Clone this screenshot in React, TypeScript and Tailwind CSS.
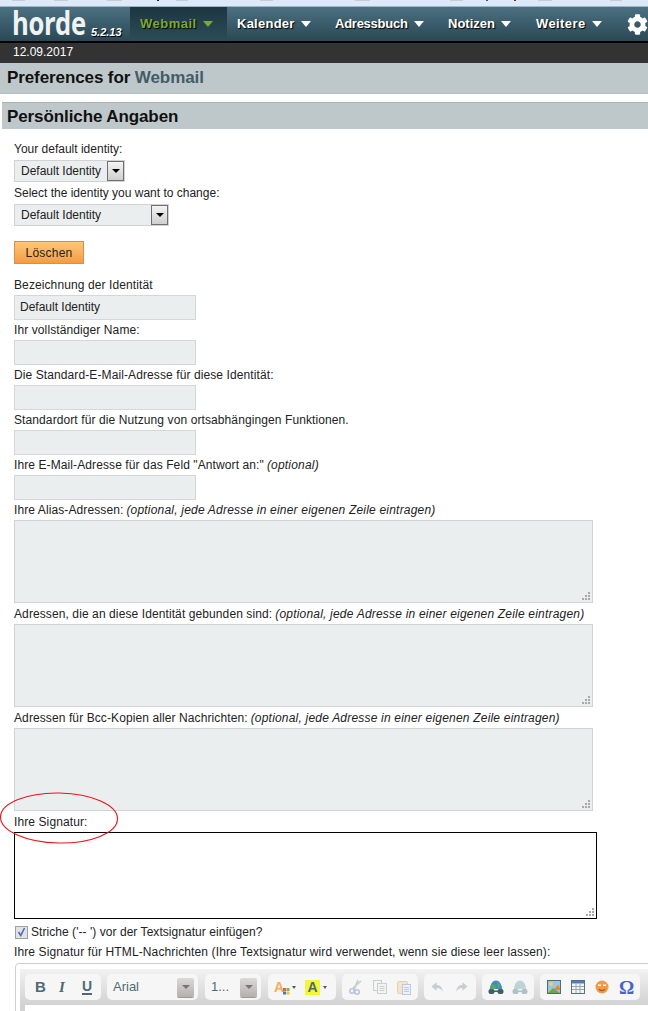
import { FaCog } from "react-icons/fa";

const stripMarks = [
  { x: 12, w: 13, c: "#c5ccd2" },
  { x: 54, w: 14, c: "#c5ccd2" },
  { x: 107, w: 15, c: "#c5ccd2" },
  { x: 157, w: 2, c: "#1a2030" },
  { x: 176, w: 12, c: "#c5ccd2" },
  { x: 260, w: 13, c: "#c5ccd2" },
  { x: 355, w: 15, c: "#c5ccd2" },
  { x: 450, w: 13, c: "#c5ccd2" },
  { x: 486, w: 2, c: "#3050b0" },
  { x: 514, w: 2, c: "#802020" },
  { x: 538, w: 14, c: "#c5ccd2" },
  { x: 610, w: 12, c: "#c5ccd2" },
];

function Label({ children, note }: { children: React.ReactNode; note?: string }) {
  return (
    <div className="flex h-[11px] items-center tracking-[0.1px] whitespace-nowrap">
      {children}
      {note && <em className="ml-[3px] tracking-[0.2px]">{note}</em>}
    </div>
  );
}

function Field({ value }: { value?: string }) {
  return (
    <div className="mt-[5px] mb-[4px] h-[25px] w-[182px] border border-[#d4d7d7] bg-[#ebeeee] px-[5px] leading-[22px]">
      {value}
    </div>
  );
}

function Area() {
  return (
    <div className="relative mt-[5px] mb-[5px] h-[83px] w-[579px] border border-[#d0d3d3] bg-[#ebeeee]">
      <Grip />
    </div>
  );
}

function Grip() {
  return (
    <svg className="absolute right-[2px] bottom-[2px]" width="9" height="9" viewBox="0 0 9 9" fill="#a9a9a9">
      <rect x="7" y="1" width="2" height="2" />
      <rect x="4" y="4" width="2" height="2" />
      <rect x="7" y="4" width="2" height="2" />
      <rect x="1" y="7" width="2" height="2" />
      <rect x="4" y="7" width="2" height="2" />
      <rect x="7" y="7" width="2" height="2" />
    </svg>
  );
}

function SelectBox({ width }: { width: string }) {
  return (
    <div className={`flex h-[22px] items-center justify-between border border-[#d0d3d3] bg-[#ebeeee] pl-[6px] ${width}`}>
      <span>Default Identity</span>
      <span className="flex h-[20px] w-[17px] items-center justify-center border border-[#6f6f6f] bg-gradient-to-b from-[#f4f4f4] to-[#cfcfcf]">
        <span className="h-0 w-0 border-x-[4px] border-t-[4px] border-x-transparent border-t-black" />
      </span>
    </div>
  );
}

function NavItem({ label, className }: { label: string; className: string }) {
  return (
    <div className={`flex h-full shrink-0 items-center gap-[6px] text-[13px] font-bold text-white [text-shadow:1px_1px_1px_#000] ${className}`}>
      {label}
      <span className="h-0 w-0 border-x-[5px] border-t-[6px] border-x-transparent border-t-white" />
    </div>
  );
}

function ToolGroup({ children, className }: { children: React.ReactNode; className?: string }) {
  return <div className={`flex h-[26px] shrink-0 items-center rounded-[5px] bg-[#f6f6f6] ${className ?? ""}`}>{children}</div>;
}

function DropArrow() {
  return (
    <span className="flex h-[19px] w-[17px] items-center justify-center rounded-[2px] bg-gradient-to-b from-[#dcd9d9] to-[#b4b0b0] shadow-[0_1px_0_#999]">
      <span className="h-0 w-0 border-x-[4px] border-t-[4px] border-x-transparent border-t-[#777]" />
    </span>
  );
}

function Caret({ className }: { className: string }) {
  return <span className={`h-0 w-0 border-x-[2.5px] border-t-[3px] border-x-transparent border-t-[#555] ${className}`} />;
}

export default function App() {
  return (
    <div className="relative h-[1011px] w-[648px] overflow-hidden bg-white font-['Liberation_Sans',Arial,sans-serif] text-[12px] text-[#222]">
      <div className="relative h-[6px] bg-[#dce9f8]">
        {stripMarks.map((m) => (
          <span key={m.x} className="absolute top-0 h-[1px]" style={{ left: m.x, width: m.w, backgroundColor: m.c }} />
        ))}
      </div>
      <div className="h-[1px] bg-[#9fb4c4]" />

      <div className="flex h-[34px] items-center bg-gradient-to-b from-[#4b7182] to-[#2b4854]">
        <div className="flex h-full w-[130px] shrink-0 items-end pl-[12px]">
          <div className="h-full w-[73px] shrink-0">
            <span className="block origin-left scale-x-[0.8] font-['Open_Sans',sans-serif] text-[32px] leading-[31px] font-bold tracking-[-0.5px] whitespace-nowrap text-[#f0f3f3]">
              horde
            </span>
          </div>
          <span className="mb-[3px] ml-[6px] text-[11px] leading-none font-bold italic text-white [text-shadow:1px_1px_0_#000]">5.2.13</span>
        </div>
        <div className="flex h-full w-[97px] shrink-0 items-center gap-[6px] bg-gradient-to-b from-[#1d3640] to-[#2d4c58] pl-[10px] text-[13px] font-bold tracking-[0.5px] text-[#7aa83a] [text-shadow:1px_1px_1px_#000]">
          Webmail
          <span className="h-0 w-0 border-x-[5px] border-t-[6px] border-x-transparent border-t-[#7aa83a]" />
        </div>
        <NavItem label="Kalender" className="ml-[10px] w-[98px] tracking-[0.25px]" />
        <NavItem label="Adressbuch" className="w-[113px] tracking-[-0.25px]" />
        <NavItem label="Notizen" className="w-[88px]" />
        <NavItem label="Weitere" className="w-[91px] tracking-[0.4px]" />
        <FaCog className="shrink-0 text-[21px] text-white" />
      </div>
      <div className="h-[2px] bg-black" />

      <div className="h-[20px] bg-[#333] pl-[13px] leading-[19px] text-white">12.09.2017</div>

      <div className="h-[31px] border-b border-[#b5bfc1] bg-[#bec8ca] pl-[7px] text-[17px] leading-[29px] font-bold tracking-[-0.1px] text-[#111]">
        Preferences for <span className="text-[#425c68]">Webmail</span>
      </div>

      <div className="mt-[8px] ml-[2px] h-[27px] border-t border-[#a9b3b5] bg-[#bec8ca] pl-[5px] text-[17px] leading-[28px] font-bold tracking-[-0.1px] text-[#111]">
        Persönliche Angaben
      </div>

      <div className="pl-[14px]">
        <div className="mt-[14px] flex h-[11px] items-center whitespace-nowrap">Your default identity:</div>
        <div className="mt-[6px] mb-[5px]">
          <SelectBox width="w-[111px]" />
        </div>
        <div className="flex h-[11px] items-center whitespace-nowrap">Select the identity you want to change:</div>
        <div className="mt-[6px]">
          <SelectBox width="w-[155px]" />
        </div>

        <button className="mt-[15px] block h-[23px] w-[70px] border border-[#d98f45] bg-gradient-to-b from-[#fdc778] to-[#f39c43] text-center text-[12px] tracking-[0.2px] text-[#222]">
          Löschen
        </button>

        <div className="mt-[15px]">
          <Label>Bezeichnung der Identität</Label>
          <Field value="Default Identity" />
          <Label>Ihr vollständiger Name:</Label>
          <Field />
          <Label>Die Standard-E-Mail-Adresse für diese Identität:</Label>
          <Field />
          <Label>Standardort für die Nutzung von ortsabhängingen Funktionen.</Label>
          <Field />
          <Label note="(optional)">Ihre E-Mail-Adresse für das Feld "Antwort an:"</Label>
          <Field />
          <Label note="(optional, jede Adresse in einer eigenen Zeile eintragen)">Ihre Alias-Adressen:</Label>
          <Area />
          <Label note="(optional, jede Adresse in einer eigenen Zeile eintragen)">Adressen, die an diese Identität gebunden sind:</Label>
          <Area />
          <Label note="(optional, jede Adresse in einer eigenen Zeile eintragen)">Adressen für Bcc-Kopien aller Nachrichten:</Label>
          <Area />
          <Label>Ihre Signatur:</Label>
          <div className="relative mt-[5px] h-[87px] w-[583px] border-[1.5px] border-black bg-white">
            <Grip />
          </div>
        </div>

        <div className="mt-[6px] flex h-[14px] items-center gap-[3px] tracking-[0.05px]">
          <span className="ml-[1px] flex h-[13px] w-[13px] items-center justify-center border border-[#a0a0a0] bg-[#e2e2e2]">
            <svg width="9" height="10" viewBox="0 0 9 10" fill="none" stroke="#4a6cc4" strokeWidth="1.6">
              <path d="M1.5 5 L3.8 8.5 L7.5 1" />
            </svg>
          </span>
          Striche ('-- ') vor der Textsignatur einfügen?
        </div>
        <div className="mt-[8px] h-[11px] leading-[11px] tracking-[0.12px] whitespace-nowrap">
          Ihre Signatur für HTML-Nachrichten (Ihre Textsignatur wird verwendet, wenn sie diese leer lassen):
        </div>

        <div className="mt-[5px] ml-[1px] h-[60px] w-[660px] rounded-[4px] border border-[#cfcfcf] bg-white px-[4px] py-[5px]">
          <div className="flex h-[36px] items-start gap-[6px] bg-gradient-to-b from-[#f2f2f2] to-[#d2d2d2] px-[5px] pt-[5px]">
            <ToolGroup className="w-[76px] text-[#4d6b72]">
              <span className="ml-[10px] w-[24px] text-[15px] font-bold">B</span>
              <span className="w-[23px] font-['Liberation_Serif',serif] text-[15px] font-bold italic">I</span>
              <span className="border-b-[2px] border-[#4d6b72] text-[14px] leading-[14px] font-bold">U</span>
            </ToolGroup>
            <ToolGroup className="w-[91px] justify-between pr-[4px] pl-[6px] text-[13px] text-[#4d6b72]">
              <span>Arial</span>
              <DropArrow />
            </ToolGroup>
            <ToolGroup className="ml-[1px] w-[56px] justify-between pr-[4px] pl-[6px] text-[13px] text-[#4d6b72]">
              <span>1...</span>
              <DropArrow />
            </ToolGroup>
            <ToolGroup className="ml-[1px] w-[68px] pl-[6px]">
              <span className="text-[14px] leading-none font-bold text-[#f5ae5b]">A</span>
              <svg width="7" height="7" viewBox="0 0 7 7" className="mt-[8px] -ml-[1px]">
                <rect x="0" y="0" width="3" height="3" fill="#e0643c" />
                <rect x="3.5" y="0" width="3" height="3" fill="#7ab648" />
                <rect x="0" y="3.5" width="3" height="3" fill="#3f78d6" />
                <rect x="3.5" y="3.5" width="3" height="3" fill="#f0c330" />
              </svg>
              <Caret className="ml-[2px]" />
              <span className="ml-[9px] flex h-[15px] w-[15px] items-center justify-center bg-[#f5f53c] text-[14px] font-bold text-[#4d6b72]">A</span>
              <Caret className="ml-[3px]" />
            </ToolGroup>
            <ToolGroup className="w-[76px] gap-[8px] pl-[6px]">
              <svg width="16" height="16" viewBox="0 0 16 16" fill="none" stroke="#b8c4dc" strokeWidth="1.6">
                <path d="M10 1 L6 11 M13 2 L5 9" stroke="#c5cccc" />
                <circle cx="4" cy="12" r="2.2" />
                <circle cx="9" cy="13" r="2.2" />
              </svg>
              <svg width="16" height="16" viewBox="0 0 16 16" fill="#f4f4f4" stroke="#c8cfcf">
                <rect x="1.5" y="1.5" width="8" height="10" />
                <rect x="5.5" y="4.5" width="9" height="10" />
                <path d="M7.5 7.5h5M7.5 9.5h5M7.5 11.5h5" />
              </svg>
              <svg width="16" height="16" viewBox="0 0 16 16" fill="#f6e3cc" stroke="#e3cfb8">
                <rect x="1.5" y="2.5" width="10" height="12" rx="1" />
                <rect x="6.5" y="5.5" width="8" height="10" fill="#eef1f8" stroke="#b8c8e6" />
                <path d="M8 8.5h5M8 10.5h5M8 12.5h5" stroke="#b8c8e6" />
              </svg>
            </ToolGroup>
            <ToolGroup className="w-[52px] gap-[11px] pl-[7px]">
              <svg width="13" height="12" viewBox="0 0 14 12" fill="#c6cfcf">
                <path d="M6 1 L0.5 5.5 L6 10 V7 C9 7 11 8 12.5 11 C12.5 6.5 10 3.8 6 3.8 Z" />
              </svg>
              <svg width="13" height="12" viewBox="0 0 14 12" fill="#c6cfcf">
                <path d="M8 1 L13.5 5.5 L8 10 V7 C5 7 3 8 1.5 11 C1.5 6.5 4 3.8 8 3.8 Z" />
              </svg>
            </ToolGroup>
            <ToolGroup className="w-[52px] gap-[8px] pl-[6px]">
              <svg width="16" height="16" viewBox="0 0 16 16">
                <path d="M2 10 A6 8.5 0 0 1 14 10 Z" fill="#3f86d8" />
                <path d="M4 5 L8 7 L7 10 H3 Z M9 2.5 L12.5 6 L10 10 Z" fill="#5cae4a" />
                <rect x="0.5" y="10" width="6" height="5" rx="2" fill="#3f5f66" />
                <rect x="9.5" y="10" width="6" height="5" rx="2" fill="#3f5f66" />
                <rect x="5" y="11.5" width="6" height="1.5" fill="#3f5f66" />
              </svg>
              <svg width="16" height="16" viewBox="0 0 16 16" opacity="0.45">
                <path d="M2 10 A6 8.5 0 0 1 14 10 Z" fill="#7fa8d8" />
                <path d="M4 5 L8 7 L7 10 H3 Z M9 2.5 L12.5 6 L10 10 Z" fill="#7db070" />
                <rect x="0.5" y="10" width="6" height="5" rx="2" fill="#5f7f86" />
                <rect x="9.5" y="10" width="6" height="5" rx="2" fill="#5f7f86" />
                <rect x="5" y="11.5" width="6" height="1.5" fill="#5f7f86" />
              </svg>
            </ToolGroup>
            <ToolGroup className="w-[100px] gap-[10px] pl-[7px]">
              <svg width="14" height="14" viewBox="0 0 14 14">
                <rect x="0.5" y="0.5" width="13" height="13" fill="#9cc4e4" stroke="#4d6b72" />
                <circle cx="4" cy="4" r="2" fill="#f2d060" />
                <path d="M1 13 L6 8 L13 13 Z" fill="#6aa84f" />
                <path d="M8 8 L11 5 L13 8 V10 H8 Z" fill="#e8843c" />
              </svg>
              <svg width="14" height="14" viewBox="0 0 14 14">
                <rect x="0.5" y="0.5" width="13" height="13" fill="#f2f4f4" stroke="#5b7178" />
                <rect x="1" y="1" width="12" height="2.5" fill="#4f7cc0" />
                <path d="M5 3.5V13M9 3.5V13M1 6.5H13M1 9.5H13" stroke="#9aa8ac" />
              </svg>
              <svg width="14" height="14" viewBox="0 0 14 14">
                <circle cx="7" cy="7" r="6.5" fill="#f39a46" />
                <rect x="3" y="4.5" width="3" height="1.5" fill="#fff" />
                <rect x="8" y="4.5" width="3" height="1.5" fill="#fff" />
                <path d="M4 9 C5 11 9 11 10 9" stroke="#b85a1c" strokeWidth="1.4" fill="none" />
              </svg>
              <span className="font-['Liberation_Serif',serif] text-[19px] leading-none font-bold text-[#4a62c8]">Ω</span>
            </ToolGroup>
          </div>
          <div className="h-[12px] bg-[#d2d2d2] pl-[5px]">
            <div className="h-full bg-white" />
          </div>
        </div>
      </div>

      <svg className="pointer-events-none absolute top-[791px] left-0" width="120" height="54" viewBox="0 0 120 54" fill="none">
        <ellipse cx="59" cy="27" rx="58.5" ry="25" stroke="#e8141c" strokeWidth="1.1" transform="rotate(1 59 27)" />
      </svg>
    </div>
  );
}
